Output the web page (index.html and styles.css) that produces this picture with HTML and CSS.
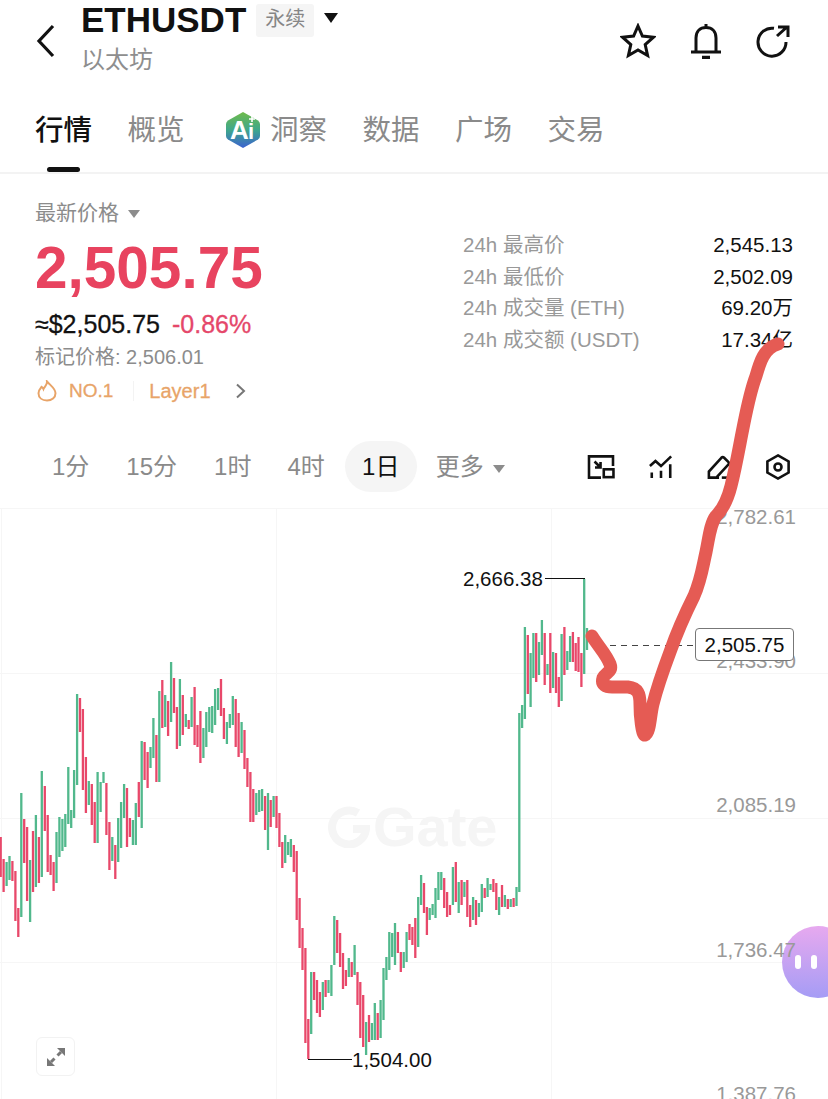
FILE: index.html
```html
<!DOCTYPE html>
<html lang="zh">
<head>
  <meta charset="UTF-8">
  <meta name="viewport" content="width=device-width, initial-scale=1.0">
  <title>ETHUSDT 永续</title>
  <link rel="stylesheet" href="styles.css">
</head>
<body>

  <!-- Top bar -->
  <header class="topbar">
    <svg class="back" width="20" height="34" viewBox="0 0 20 34"><path d="M17 2 L3 17 L17 32" /></svg>
    <div class="title-block">
      <div class="title-row">
        <span class="symbol">ETHUSDT</span>
        <span class="badge">永续</span>
        <span class="caret caret-black"></span>
      </div>
      <div class="coin-name">以太坊</div>
    </div>
    <div class="top-icons">
      <svg width="36" height="36" viewBox="0 0 36 36"><path d="M18 3 L22.4 13 L33.5 14.2 L25.2 21.6 L27.6 32.6 L18 27 L8.4 32.6 L10.8 21.6 L2.5 14.2 L13.6 13 Z" /></svg>
      <svg width="32" height="36" viewBox="0 0 32 36"><path d="M16 1 V4 M6 28 V15 C6 8.5 10 4.5 16 4.5 C22 4.5 26 8.5 26 15 V28 M1 29 H31" /><path class="thick" d="M12 34.5 H20" /></svg>
      <svg width="34" height="34" viewBox="0 0 34 34"><path d="M30 18 A14 14 0 1 1 18 4.3 M21 12 L31 3 M22 3 H32 V13" /></svg>
    </div>
  </header>

  <!-- Tabs -->
  <nav class="tabs">
    <a class="tab active">行情</a>
    <a class="tab">概览</a>
    <a class="tab tab-ai">
      <svg width="36" height="38" viewBox="0 0 36 38">
        <defs>
          <linearGradient id="aiFill" x1="0" y1="0" x2="0" y2="1">
            <stop offset="0" stop-color="#6fbb4a" />
            <stop offset="0.5" stop-color="#3fa78c" />
            <stop offset="1" stop-color="#3b62d0" />
          </linearGradient>
        </defs>
        <path d="M18 1 L33 9.5 Q35 11 35 13 V25 Q35 27 33 28.5 L18 37 L3 28.5 Q1 27 1 25 V13 Q1 11 3 9.5 Z" fill="url(#aiFill)" />
        <text x="5" y="28" class="ai-a">A</text>
        <text x="23" y="28" class="ai-i">i</text>
        <path d="M27 5 V11 M24 8 H30" stroke="#fff" stroke-width="1.6" />
      </svg>
      洞察
    </a>
    <a class="tab">数据</a>
    <a class="tab">广场</a>
    <a class="tab">交易</a>
  </nav>

  <!-- Price summary -->
  <section class="summary">
    <div class="price-col">
      <div class="price-label">最新价格 <span class="caret caret-grey"></span></div>
      <div class="price">2,505.75</div>
      <div class="price-sub"><span>≈$2,505.75</span><span class="change">-0.86%</span></div>
      <div class="mark">标记价格: 2,506.01</div>
      <div class="tags">
        <svg width="20" height="22" viewBox="0 0 20 22"><path d="M10 1.5 C10.5 5 7.5 6.5 6.5 9 C6 7.8 5.3 7.2 4.5 6.8 C2.5 9.2 1.5 11 1.5 13.2 C1.5 17.8 5.2 20.5 10 20.5 C14.8 20.5 18.5 17.6 18.5 13.2 C18.5 8.5 14 6 10 1.5 Z" /></svg>
        <span class="tag-no">NO.1</span>
        <span class="tag-line"></span>
        <span class="tag-name">Layer1</span>
        <svg class="tag-more" width="11" height="16" viewBox="0 0 11 16"><path d="M2 1.5 L9 8 L2 14.5" /></svg>
      </div>
    </div>
    <div class="stats">
      <div class="stat"><span>24h 最高价</span><b>2,545.13</b></div>
      <div class="stat"><span>24h 最低价</span><b>2,502.09</b></div>
      <div class="stat"><span>24h 成交量 (ETH)</span><b>69.20万</b></div>
      <div class="stat"><span>24h 成交额 (USDT)</span><b>17.34亿</b></div>
    </div>
  </section>

  <!-- Period row -->
  <div class="periods">
    <span class="period p1">1分</span>
    <span class="period p15">15分</span>
    <span class="period p1h">1时</span>
    <span class="period p4h">4时</span>
    <span class="period current">1日</span>
    <span class="period more">更多 <span class="caret caret-grey"></span></span>
    <div class="tools">
      <svg width="28" height="24" viewBox="0 0 30 26"><path d="M15 24.5 H2 V1.5 H28 V12" /><path d="M8 7 L14.5 13.5 M14.5 7.5 V13.5 H8.5" /><rect x="18" y="15.5" width="10.5" height="8.5" /></svg>
      <svg width="24" height="24" viewBox="0 0 26 26"><path d="M1 12 L7 6.5 L13 12 L24 1.5" /><path d="M3 19 V25 M13 17 V25 M23 10 V25" /></svg>
      <svg width="25" height="24" viewBox="0 0 27 26"><path d="M13 24.5 H2 V18 L15.5 3 Q17 1.5 18.5 3 L23 7.5 Q24.5 9 23 10.5 L10 24.5" /><path d="M16 24.5 H26" /></svg>
      <svg width="24" height="26" viewBox="0 0 26 28"><path d="M13 1.5 L24.5 8 V20 L13 26.5 L1.5 20 V8 Z" /><circle cx="13" cy="14" r="3.8" /></svg>
    </div>
  </div>

  <!-- Chart -->
  <main class="chart" id="chart">
    <span class="grid-h" style="top:0"></span>
    <span class="grid-h" style="top:165px"></span>
    <span class="grid-h" style="top:310px"></span>
    <span class="grid-h" style="top:454px"></span>
    <span class="grid-v" style="left:1px"></span>
    <span class="grid-v" style="left:276px"></span>
    <span class="grid-v" style="left:551px"></span>

    <div class="watermark">
      <svg width="42" height="42" viewBox="0 0 42 42"><path d="M30 7 A17 17 0 1 0 38 23 H25" /></svg>
      <span>Gate</span>
    </div>

    <div class="bubble"><i></i><i></i></div>

    <span class="axis" style="top:-3px">2,782.61</span>
    <span class="axis" style="top:141px">2,433.90</span>
    <span class="axis" style="top:285px">2,085.19</span>
    <span class="axis" style="top:430px">1,736.47</span>
    <span class="axis" style="top:574px">1,387.76</span>

    <svg class="candles" id="candles" width="828" height="591"></svg>

    <span class="hi-lo hi-text">2,666.38</span>
    <span class="hi-lo hi-line"></span>
    <span class="hi-lo lo-line"></span>
    <span class="hi-lo lo-text">1,504.00</span>

    <span class="last-dash"></span>
    <span class="last-price">2,505.75</span>

    <button class="expand">
      <svg width="22" height="22" viewBox="0 0 22 22"><path d="M12 2 H20 V10 Z M2 12 V20 H10 Z" fill="#777" /><path d="M16 6 L12.5 9.5 M6 16 L9.5 12.5" stroke="#777" stroke-width="3" /></svg>
    </button>
  </main>

  <!-- Hand drawn stroke over the page -->
  <svg class="scribble" width="828" height="1099" viewBox="0 0 828 1099">
    <path d="M592 636 C598 646 606 654 610 664 C613 672 606 672 603 678 C601 685 606 687 612 687 L628 687 C638 688 640 694 640 704 C640 716 642 736 645 735 C650 733 650 716 653 704 C657 688 664 668 670 652 C677 632 686 612 694 596 C701 580 702 570 706 552 C709 538 710 524 716 516 C722 510 728 498 731 486 C736 466 739 448 743 428 C747 408 750 392 756 376 C760 362 764 348 778 344" />
  </svg>

  <script src="chart.js"></script>
</body>
</html>
```

FILE: styles.css
```css
* {
  box-sizing: border-box;
}

html, body {
  margin: 0;
  height: 1099px;
  overflow: hidden;
}

body {
  position: relative;
  display: flex;
  flex-direction: column;
  background: #fff;
  color: #111;
  font-family: "Liberation Sans", "Noto Sans CJK SC", sans-serif;
}

svg {
  display: block;
  flex: none;
  fill: none;
  stroke: #111;
  stroke-width: 3;
}

.caret {
  display: inline-block;
  width: 0;
  height: 0;
  border-left: 7px solid transparent;
  border-right: 7px solid transparent;
  border-top: 10px solid #111;
}

.caret-grey {
  border-left-width: 6px;
  border-right-width: 6px;
  border-top: 8px solid #8c8c8c;
  vertical-align: middle;
  margin-left: 3px;
}

/* Top bar */
.topbar {
  display: flex;
  height: 96px;
  flex: none;
  padding: 0 38px 0 36px;
}

.back {
  margin-top: 24px;
  stroke-width: 3.2;
}

.title-block {
  margin-left: 25px;
}

.title-row {
  display: flex;
  align-items: center;
  height: 40px;
}

.symbol {
  font-size: 35px;
  font-weight: 700;
  line-height: 40px;
}

.badge {
  margin-left: 10px;
  padding: 0 9px;
  height: 33px;
  line-height: 31px;
  background: #f5f5f5;
  color: #868686;
  font-size: 20px;
  border-radius: 3px;
}

.title-row .caret {
  margin: -4px 0 0 10px;
}

.coin-name {
  margin-top: 5px;
  color: #8e8e8e;
  font-size: 24px;
  line-height: 30px;
}

.top-icons {
  display: flex;
  gap: 34px;
  align-items: center;
  height: 36px;
  margin: 23px 0 0 auto;
}

.thick {
  stroke-width: 3.5;
}

/* Tabs */
.tabs {
  display: flex;
  gap: 35.5px;
  flex: none;
  height: 78px;
  padding-left: 35px;
  border-bottom: 2px solid #f3f3f3;
}

.tab {
  position: relative;
  font-size: 28.5px;
  line-height: 38px;
  height: 38px;
  margin-top: 15px;
  color: #8a8a8a;
}

.tab.active {
  color: #111;
  font-weight: 500;
}

.tab.active::after {
  content: "";
  position: absolute;
  left: 12px;
  top: 56px;
  width: 33px;
  height: 5px;
  border-radius: 3px;
  background: #111;
}

.tab-ai {
  display: flex;
  gap: 9px;
  align-items: center;
  margin-left: 5px;
}

.tab-ai svg {
  stroke: none;
}

.ai-a {
  fill: #fff;
  font-size: 26px;
  font-weight: 700;
}

.ai-i {
  fill: #fff;
  font-size: 22px;
  font-weight: 700;
}

/* Summary */
.summary {
  display: flex;
  justify-content: space-between;
  flex: none;
  height: 267px;
  padding: 28px 35px 0;
}

.price-label {
  color: #8c8c8c;
  font-size: 21px;
  line-height: 22px;
}

.price {
  margin-top: 14px;
  color: #e8435f;
  font-size: 58.5px;
  font-weight: 700;
  line-height: 60px;
}

.price-sub {
  display: flex;
  gap: 12px;
  margin-top: 11px;
  font-size: 25px;
  line-height: 30px;
  -webkit-text-stroke: 0.3px;
}

.change {
  color: #e5476a;
}

.mark {
  margin-top: 6px;
  color: #8c8c8c;
  font-size: 20px;
  line-height: 24px;
}

.tags {
  display: flex;
  align-items: center;
  margin: 10px 0 0 2px;
  height: 24px;
  color: #e8a468;
  font-size: 19px;
  -webkit-text-stroke: 0.3px;
}

.tags svg {
  stroke: #e8a468;
  stroke-width: 2;
}

.tag-no {
  margin-left: 12px;
}

.tag-line {
  width: 1px;
  height: 20px;
  margin: 0 15px 0 20px;
  background: #f3f3f3;
}

.tag-name {
  font-size: 20px;
}

.tags .tag-more {
  margin-left: 24px;
  stroke: #777;
}

.stats {
  width: 330px;
  margin-top: 27px;
}

.stat {
  display: flex;
  justify-content: space-between;
  height: 31.7px;
  line-height: 31.7px;
  font-size: 20.5px;
  color: #999;
}

.stat b {
  color: #111;
  font-weight: 400;
}

/* Periods */
.periods {
  display: flex;
  align-items: center;
  flex: none;
  height: 51px;
  margin-bottom: 16px;
  font-size: 24px;
  color: #8a8a8a;
}

.period {
  line-height: 51px;
}

.p1 { margin-left: 52px; }
.p15 { margin-left: 37px; }
.p1h { margin-left: 37px; }
.p4h { margin-left: 36px; }

.current {
  width: 72px;
  margin-left: 20px;
  border-radius: 26px;
  background: #f5f5f5;
  color: #111;
  text-align: center;
}

.more {
  margin-left: 19px;
}

.tools {
  display: flex;
  gap: 34px;
  align-items: center;
  margin-left: auto;
  padding-right: 38px;
}

.tools svg {
  stroke-width: 2.8;
}

/* Chart */
.chart {
  position: relative;
  flex: 1;
  overflow: hidden;
}

.grid-h {
  position: absolute;
  left: 0;
  right: 0;
  height: 1px;
  background: #f6f6f6;
}

.grid-v {
  position: absolute;
  top: 0;
  bottom: 0;
  width: 1px;
  background: #f6f6f6;
}

.watermark {
  position: absolute;
  left: 328px;
  top: 297px;
  display: flex;
  align-items: center;
  gap: 3px;
  color: #f5f5f5;
  font-size: 56px;
  font-weight: 700;
  line-height: 44px;
}

.watermark svg {
  stroke: #f5f5f5;
  stroke-width: 8;
}

.axis {
  position: absolute;
  right: 32px;
  color: #999;
  font-size: 20.5px;
  line-height: 24px;
}

.candles {
  position: absolute;
  left: 0;
  top: 0;
  stroke-width: 2.3;
}

.hi-lo {
  position: absolute;
  color: #111;
  font-size: 20.5px;
  line-height: 24px;
}

.hi-text {
  left: 463px;
  top: 59px;
}

.hi-line {
  left: 545px;
  top: 70px;
  width: 40px;
  height: 1px;
  background: #111;
}

.lo-line {
  left: 308px;
  top: 551px;
  width: 44px;
  height: 1px;
  background: #111;
}

.lo-text {
  left: 352px;
  top: 540px;
}

.last-dash {
  position: absolute;
  left: 610px;
  top: 137px;
  width: 85px;
  height: 1px;
  background: repeating-linear-gradient(90deg, #444 0 6px, transparent 6px 11px);
}

.last-price {
  position: absolute;
  left: 695px;
  top: 120px;
  width: 99px;
  height: 33px;
  border: 1px solid #777;
  border-radius: 4px;
  background: #fff;
  font-size: 20.5px;
  line-height: 31px;
  text-align: center;
}

.expand {
  position: absolute;
  left: 36px;
  top: 529px;
  display: flex;
  align-items: center;
  justify-content: center;
  width: 39px;
  height: 39px;
  padding: 0;
  border: 1px solid #f2f2f2;
  border-radius: 6px;
  background: #fff;
}

.expand svg {
  stroke: none;
}

.bubble {
  position: absolute;
  left: 782px;
  top: 418px;
  display: flex;
  gap: 10px;
  align-items: center;
  width: 72px;
  height: 72px;
  padding-left: 13px;
  border-radius: 50%;
  background: linear-gradient(#e7a9ef, #a59cf5);
}

.bubble i {
  width: 6px;
  height: 14px;
  border-radius: 3px;
  background: #fff;
}

.scribble {
  position: absolute;
  left: 0;
  top: 0;
  stroke: #e55b54;
  stroke-width: 13;
  stroke-linecap: round;
  stroke-linejoin: round;
  pointer-events: none;
}
```

FILE: chart.js
```js
// candles: colour, top y, bottom y (page coords), each run spread evenly between two x
const runs = [
  { from: 0.7, to: 268, bars: [
    'r837-877','r859-892','g862-886','g856-880','r861-881','r871-921','r908-937','g793-917',
    'r819-863','r827-901','g860-922','r831-892','g815-887','r837-883','g771-877','r786-831',
    'r815-872','r855-875','r862-891','g832-883','g817-857','g819-851','g814-847','g767-824',
    'g810-828','g770-818','g694-785','r698-732','r709-790','r757-813','g781-805','r784-825',
    'r802-843','g772-843','g782-812','g772-783','r783-835','r822-870','g837-861','r845-879',
    'g818-862','g802-848','g784-818','r788-847','r818-837','g820-845','g803-845','r782-817',
    'g741-828','r742-780','r752-788','g747-768','g718-758','r735-782','g691-782','r680-728',
    'g695-727','r701-736','g662-722','r678-713','r707-749','g679-746','r695-735','g714-727',
    'r720-729','g697-727','r687-745','r725-747','r711-763','g728-758','g712-747','g707-732',
    'g706-733','g689-725','g688-710','r679-716','r708-739','g722-744','g714-728','g696-725',
    'r699-747','r713-757','g722-753','r730-769','r758-787','r772-822','r789-822','g793-815',
    'g790-812','g789-811','r796-830','g793-850'
  ]},
  { from: 270.7, to: 516.5, bars: [
    'r800-827','g796-817','r796-828','r813-847','r842-868','g835-863','g842-855','g839-857',
    'r845-872','r851-920','r898-948','r928-970','r948-1043','r1019-1059','g972-1034','r972-1000',
    'r980-1013','r992-1017','g982-1010','r980-997','g980-993','g965-996','g916-965','r920-953',
    'r933-967','r953-989','r970-986','g958-977','r962-977','g945-975','r972-1005','r982-1038',
    'r995-1047','g1022-1055','r1015-1042','g1023-1040','g1003-1040','r1013-1040','g1000-1038','g968-1020',
    'g957-980','g932-970','g933-957','g923-965','r932-953','r952-972','g952-968','g932-962',
    'r924-940','r927-945','r918-958','g897-947','g875-905','r883-913','r907-935','g908-920',
    'g904-915','g888-918','g872-900','g872-890','r878-908','r892-917','r905-915','g867-905',
    'r862-902','g882-913','r880-905','g882-897','r880-917','r905-927','g897-920','r900-925',
    'g903-917','g884-912','r888-898','g878-897','g884-890','r879-892','r883-910','g897-915',
    'r885-907','g895-907','r899-909','g899-907','r898-907','g887-906'
  ]},
  { from: 519.3, to: 587, bars: [
    'g713-892','g705-728','g627-719','r635-694','g653-707','g633-678','r633-682','g642-675',
    'g620-655','r633-685','g664-675','r633-693','g652-688','r653-693','r677-707','g634-701',
    'r627-675','g651-670','g636-662','r632-662','r643-671','r637-672','r653-687','g579-674',
    'g628-650'
  ]}
];

const chartTop = 508;
const colours = { g: '#51b88c', r: '#e8486a' };
const paths = { g: '', r: '' };

runs.forEach(run => {
  const step = (run.to - run.from) / (run.bars.length - 1);
  run.bars.forEach((bar, i) => {
    const [top, bottom] = bar.slice(1).split('-').map(Number);
    const x = (run.from + step * i).toFixed(1);
    paths[bar[0]] += `M${x} ${top - chartTop}V${bottom - chartTop}`;
  });
});

const svg = document.getElementById('candles');
Object.keys(paths).forEach(key => {
  const path = document.createElementNS('http://www.w3.org/2000/svg', 'path');
  path.setAttribute('d', paths[key]);
  path.setAttribute('stroke', colours[key]);
  svg.appendChild(path);
});
```
